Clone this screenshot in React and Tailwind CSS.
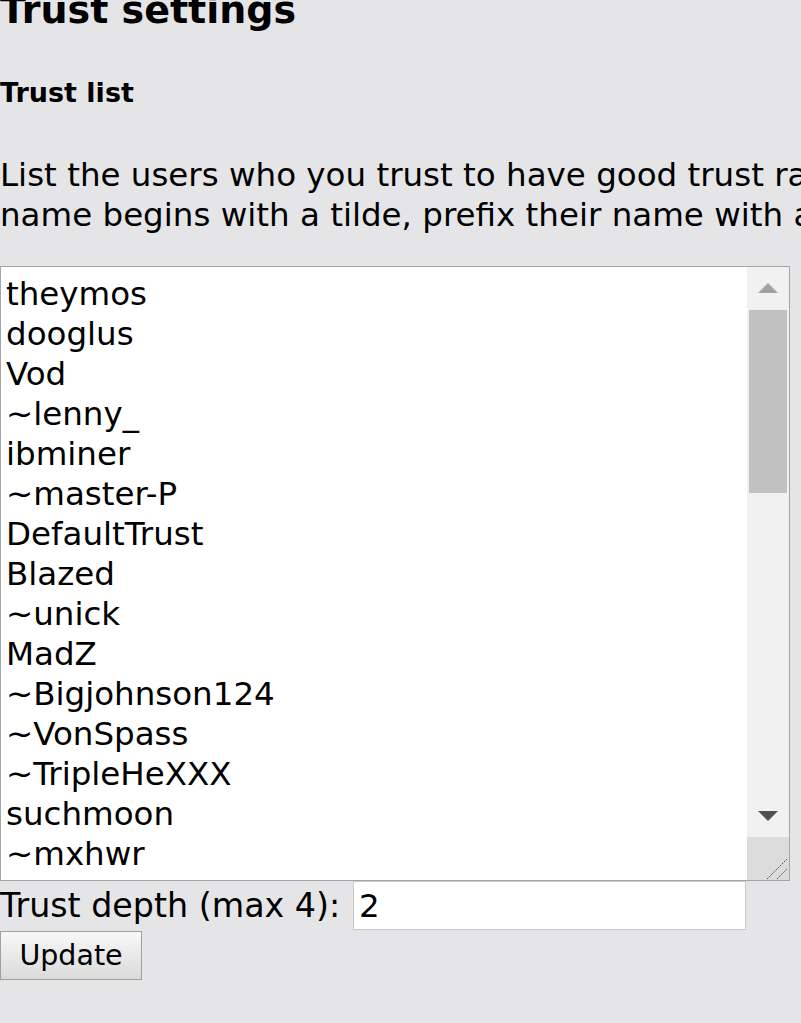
import React from 'react';

const names = [
  'theymos',
  'dooglus',
  'Vod',
  '~lenny_',
  'ibminer',
  '~master-P',
  'DefaultTrust',
  'Blazed',
  '~unick',
  'MadZ',
  '~Bigjohnson124',
  '~VonSpass',
  '~TripleHeXXX',
  'suchmoon',
  '~mxhwr',
  '~Ticked',
];

const TrustList = () => (
  <div className="flex h-[615px] w-[790px] border border-[#a6a6a6] bg-white overflow-hidden">
    <div className="flex-1 overflow-hidden pl-[5px] pt-[7px] text-[32.5px] leading-[40px] text-black">
      {names.map((n) => (
        <div key={n} className="whitespace-nowrap">{n}</div>
      ))}
    </div>
    <div className="flex w-[42px] flex-col bg-[#f1f1f1]">
      <div className="flex h-[42px] items-center justify-center">
        <svg width="20" height="10" viewBox="0 0 20 10">
          <polygon points="10,0 20,10 0,10" fill="#a3a3a3" />
        </svg>
      </div>
      <div className="mt-px h-[183px] px-[2px]">
        <div className="h-full bg-[#c1c1c1]" />
      </div>
      <div className="flex-1" />
      <div className="flex h-[42px] items-center justify-center">
        <svg width="20" height="10" viewBox="0 0 20 10">
          <polygon points="0,0 20,0 10,10" fill="#505050" />
        </svg>
      </div>
      <div className="relative h-[43px] bg-[#dcdcdc]">
        <svg className="absolute bottom-0 right-0" width="24" height="24" viewBox="0 0 24 24">
          <line x1="2" y1="23" x2="22" y2="3" stroke="#555" strokeWidth="1" strokeDasharray="2 1" />
          <line x1="12" y1="23" x2="22" y2="13" stroke="#555" strokeWidth="1" strokeDasharray="2 1" />
        </svg>
      </div>
    </div>
  </div>
);

export default function App() {
  return (
    <div className="min-h-screen overflow-hidden bg-[#e5e5e8] font-['DejaVu_Sans',Verdana,sans-serif] text-black">
      <h1 className="mt-[-12px] text-[38px] font-bold leading-[44px] whitespace-nowrap">Trust settings</h1>
      <h2 className="mt-[45px] text-[27px] font-bold leading-[32px]">Trust list</h2>
      <p className="mt-[46px] whitespace-nowrap text-[32.5px] leading-[40px]">
        List the users who you trust to have good trust ratings. If a user's
        <br />
        name begins with a tilde, prefix their name with another tilde.
      </p>
      <div className="mt-[31px]">
        <TrustList />
      </div>
      <div className="flex h-[49px] items-center">
        <label className="text-[33.3px] leading-[49px] whitespace-nowrap">Trust depth (max 4):</label>
        <input
          className="ml-auto mr-[55px] h-[49px] w-[393px] border border-[#c8c8c8] bg-white px-[5px] text-[32.5px] outline-none"
          defaultValue="2"
        />
      </div>
      <button className="mt-px h-[49px] w-[142px] border border-[#a0a0a0] bg-gradient-to-b from-[#f8f8f8] to-[#dadada] text-[28.5px] leading-[40px]">
        Update
      </button>
    </div>
  );
}
